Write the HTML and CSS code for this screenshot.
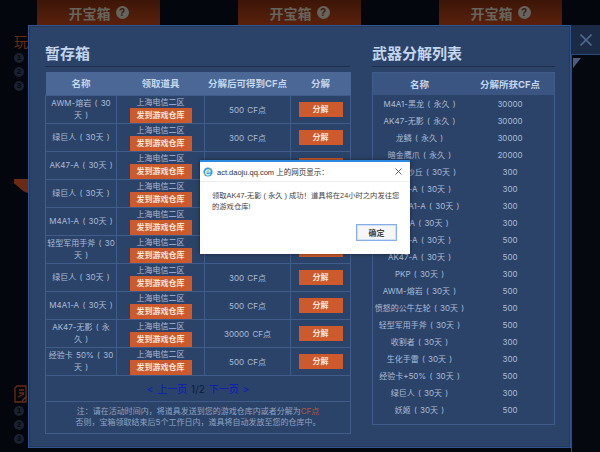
FILE: index.html
```html
<!DOCTYPE html>
<html lang="zh-CN">
<head>
<meta charset="utf-8">
<title>暂存箱</title>
<link rel="stylesheet" href="styles.css">
</head>
<body>
<div class="page">
  <div class="tiles">
    <div class="tile"><span>开宝箱</span><i class="help">?</i></div>
    <div class="tile"><span>开宝箱</span><i class="help">?</i></div>
    <div class="tile"><span>开宝箱</span><i class="help">?</i></div>
  </div>
  <div class="side">
    <div class="side-title">玩法</div>
    <div class="steps"><b>1</b><b>2</b><b>3</b></div>
    <div class="flag"></div>
    <svg class="side-icon" width="14" height="18" viewBox="0 0 14 18"><path d="M3 1h9v16H1V3zM5 5h5M5 8h5M4 12l6-3M8 16l5-5" fill="none" stroke="#6b2a14" stroke-width="1.3"/></svg>
    <div class="steps"><b>1</b><b>2</b><b>3</b></div>
  </div>
</div>

<div class="modal">
  <section class="col-left">
    <h2 class="title">暂存箱</h2>
    <table class="store">
      <colgroup><col class="c1"><col class="c2"><col class="c3"><col class="c4"></colgroup>
      <thead><tr><th>名称</th><th>领取道具</th><th>分解后可得到CF点</th><th>分解</th></tr></thead>
      <tbody>
        <tr><td class="name">AWM-熔岩 (&nbsp;30天&nbsp;)</td><td class="chan">上海电信二区<a class="btn wide">发到游戏仓库</a></td><td>500 CF点</td><td><a class="btn small">分解</a></td></tr>
        <tr><td class="name">绿巨人 (&nbsp;30天&nbsp;)</td><td class="chan">上海电信二区<a class="btn wide">发到游戏仓库</a></td><td>300 CF点</td><td><a class="btn small">分解</a></td></tr>
        <tr><td class="name">AK47-A (&nbsp;30天&nbsp;)</td><td class="chan">上海电信二区<a class="btn wide">发到游戏仓库</a></td><td>500 CF点</td><td><a class="btn small">分解</a></td></tr>
        <tr><td class="name">绿巨人 (&nbsp;30天&nbsp;)</td><td class="chan">上海电信二区<a class="btn wide">发到游戏仓库</a></td><td>300 CF点</td><td><a class="btn small">分解</a></td></tr>
        <tr><td class="name">M4A1-A (&nbsp;30天&nbsp;)</td><td class="chan">上海电信二区<a class="btn wide">发到游戏仓库</a></td><td>500 CF点</td><td><a class="btn small">分解</a></td></tr>
        <tr><td class="name">轻型军用手斧 (&nbsp;30天&nbsp;)</td><td class="chan">上海电信二区<a class="btn wide">发到游戏仓库</a></td><td>500 CF点</td><td><a class="btn small">分解</a></td></tr>
        <tr><td class="name">绿巨人 (&nbsp;30天&nbsp;)</td><td class="chan">上海电信二区<a class="btn wide">发到游戏仓库</a></td><td>300 CF点</td><td><a class="btn small">分解</a></td></tr>
        <tr><td class="name">M4A1-A (&nbsp;30天&nbsp;)</td><td class="chan">上海电信二区<a class="btn wide">发到游戏仓库</a></td><td>500 CF点</td><td><a class="btn small">分解</a></td></tr>
        <tr><td class="name">AK47-无影 (&nbsp;永久&nbsp;)</td><td class="chan">上海电信二区<a class="btn wide">发到游戏仓库</a></td><td>30000 CF点</td><td><a class="btn small">分解</a></td></tr>
        <tr><td class="name">经验卡 50% (&nbsp;30天&nbsp;)</td><td class="chan">上海电信二区<a class="btn wide">发到游戏仓库</a></td><td>500 CF点</td><td><a class="btn small">分解</a></td></tr>
        <tr class="pager-row"><td colspan="4"><a class="pg">&lt; 上一页</a> <span class="pg-num">1/2</span> <a class="pg">下一页 &gt;</a></td></tr>
        <tr class="note-row"><td colspan="4">注：请在活动时间内，将道具发送到您的游戏仓库内或者分解为<em>CF点</em><br>否则，宝箱领取结束后5个工作日内，道具将自动发放至您的仓库中。</td></tr>
      </tbody>
    </table>
  </section>
  <section class="col-right">
    <h2 class="title">武器分解列表</h2>
    <div class="list">
      <div class="list-head"><span>名称</span><span>分解所获CF点</span></div>
      <ul class="list-rows">
        <li><span>M4A1-黑龙 ( 永久 )</span><span>30000</span></li>
        <li><span>AK47-无影 ( 永久 )</span><span>30000</span></li>
        <li><span>龙鳞 ( 永久 )</span><span>30000</span></li>
        <li><span>暗金鹰爪 ( 永久 )</span><span>20000</span></li>
        <li><span>AWM-沙丘 ( 30天 )</span><span>300</span></li>
        <li><span>M4A1-A ( 30天 )</span><span>300</span></li>
        <li><span>Barrett A1-A ( 30天 )</span><span>300</span></li>
        <li><span>M14-A ( 30天 )</span><span>300</span></li>
        <li><span>M4A1-A ( 30天 )</span><span>500</span></li>
        <li><span>AK47-A ( 30天 )</span><span>500</span></li>
        <li><span>PKP ( 30天 )</span><span>300</span></li>
        <li><span>AWM-熔岩 ( 30天 )</span><span>500</span></li>
        <li><span>愤怒的公牛左轮 ( 30天 )</span><span>500</span></li>
        <li><span>轻型军用手斧 ( 30天 )</span><span>500</span></li>
        <li><span>收割者 ( 30天 )</span><span>300</span></li>
        <li><span>生化手雷 ( 30天 )</span><span>300</span></li>
        <li><span>经验卡+50% ( 30天 )</span><span>500</span></li>
        <li><span>绿巨人 ( 30天 )</span><span>300</span></li>
        <li><span>妖姬 ( 30天 )</span><span>500</span></li>
      </ul>
    </div>
  </section>
</div>

<div class="close-panel">
  <div class="close-btn"><svg width="12" height="12" viewBox="0 0 12 12"><path d="M.5.5l11 11M11.5.5l-11 11" stroke="#50668a" stroke-width="1.6" fill="none"/></svg></div>
  <div class="behind"><div class="corner"></div></div>
</div>

<div class="dialog" role="dialog">
  <div class="dlg-head">
    <svg class="ie" width="10" height="10" viewBox="0 0 10 10"><circle cx="5" cy="5" r="4.6" fill="#2f9de4"/><path d="M2.6 5h4.8M7.2 6.7A2.5 2.5 0 1 1 7.4 4.6" fill="none" stroke="#fff" stroke-width="1.1"/><path d="M1 8.6C2 6 5 2 9.2 1" fill="none" stroke="#f2c230" stroke-width=".7"/></svg>
    <span class="dlg-title">act.daoju.qq.com 上的网页显示：</span>
    <svg class="dlg-x" width="7" height="7" viewBox="0 0 7 7"><path d="M.5.5l6 6M6.5.5l-6 6" stroke="#555" stroke-width=".9" fill="none"/></svg>
  </div>
  <p class="dlg-msg">领取AK47-无影 ( 永久 ) 成功！道具将在24小时之内发往您的游戏仓库!</p>
  <div class="dlg-foot"><button class="dlg-ok">确定</button></div>
</div>
</body>
</html>
```
FILE: styles.css
```css
* { box-sizing: border-box; }
html, body { margin: 0; height: 100%; }
body {
  width: 600px;
  height: 452px;
  overflow: hidden;
  position: relative;
  background: #03060c;
  font-family: Inter, "Noto Sans CJK SC", sans-serif;
}

/* page behind the modal */
.tiles { display: flex; gap: 78px; padding-left: 37px; height: 25px; }
.tile {
  width: 123px;
  height: 25px;
  display: flex;
  align-items: center;
  justify-content: center;
  gap: 5px;
  background: linear-gradient(#3c1508, #5a210c);
  color: #66645c;
  font-size: 14px;
  font-weight: 700;
}
.help {
  width: 13px;
  height: 13px;
  border-radius: 50%;
  background: #66645c;
  color: #3a1608;
  font: 700 10px/13px "Liberation Sans", sans-serif;
  text-align: center;
}
.side { width: 28px; padding: 9px 0 0 14px; }
.side-title { color: #6b2a14; font-size: 14px; line-height: 16px; white-space: nowrap; }
.steps { display: flex; flex-direction: column; gap: 4px; margin: 3px 0 0 0; }
.steps b {
  width: 10px;
  height: 10px;
  border-radius: 50%;
  background: #1a2130;
  color: #05080e;
  font: 700 8px/10px "Liberation Sans", sans-serif;
  text-align: center;
}
.flag {
  width: 14px;
  height: 14px;
  margin-top: 88px;
  background: #6b2a14;
  clip-path: polygon(0 0, 100% 0, 100% 100%, 70% 90%, 0 30%);
}
.side-icon { display: block; margin-top: 192px; }

/* modal */
.modal {
  position: absolute;
  left: 28px;
  top: 25px;
  width: 543px;
  height: 423px;
  display: flex;
  gap: 22px;
  padding: 16px 0 0 16px;
  background: #2c4369;
  border: 1px solid #2f5590;
  box-shadow: inset 0 0 0 1px #25395c;
}
.col-left { width: 305px; }
.col-right { width: 183px; }
.title {
  margin: 0 0 5px;
  height: 25px;
  line-height: 24px;
  font-size: 15px;
  font-weight: 700;
  color: #c3d6ec;
  border-bottom: 1px solid #1f2f4d;
}

.store {
  width: 305px;
  table-layout: fixed;
  border-collapse: collapse;
  font-size: 8px;
  word-spacing: 1px;
  color: #a9bcd8;
  text-align: center;
}
.c1 { width: 71px; }
.c2 { width: 88px; }
.c3 { width: 86px; }
.c4 { width: 60px; }
.store th {
  height: 23px;
  padding: 0;
  background: #4a6795;
  color: #c3d6ec;
  font-size: 9.5px;
  font-weight: 700;
  border: 0;
}
.store td { height: 28px; padding: 0; border: 1px solid #3f5c8a; }
.store .name { padding: 0 1px; line-height: 12.5px; }
.store .chan { vertical-align: top; line-height: 12px; }
.btn {
  display: block;
  margin: 0 auto;
  height: 15px;
  line-height: 15px;
  background: #cc5a2c;
  color: #f6e6d8;
  font-weight: 700;
  font-size: 8px;
}
.wide { width: 62px; }
.small { width: 44px; }
.store .pager-row td { height: 26px; font-size: 10px; }
.pg { color: #0a16c4; }
.pg-num { color: #0e1a38; }
.store .note-row td { height: 32px; line-height: 11.5px; color: #8ea3c4; }
.note-row em { font-style: normal; color: #b8562f; }

.list { height: 353px; border: 1px solid #3f5c8a; font-size: 8px; word-spacing: 1px; color: #a9bcd8; }
.list-head {
  display: flex;
  height: 22px;
  align-items: center;
  background: #3b5582;
  color: #c3d6ec;
  font-size: 9.5px;
  font-weight: 700;
  text-align: center;
}
.list-head span:first-child, .list-rows span:first-child { width: 93px; white-space: nowrap; }
.list-head span:last-child, .list-rows span:last-child { width: 88px; }
.list-rows { list-style: none; margin: 0; padding: 0; }
.list-rows li { display: flex; height: 17px; align-items: center; text-align: center; }
.list-rows span:first-child { display: flex; justify-content: center; white-space: pre; }

/* close control beside the modal */
.close-panel { position: absolute; left: 571px; top: 25px; width: 29px; height: 427px; }
.close-btn {
  height: 29px;
  display: flex;
  align-items: center;
  justify-content: center;
  background: #1c2b45;
}
.behind { height: 398px; padding: 3px 0 0 1px; border: 1px solid #2c4a7f; border-right: 0; border-bottom: 0; background: #05080f; }
.corner { width: 8px; height: 10px; background: #4a5f7e; clip-path: polygon(0 0, 100% 0, 0 100%); }

/* browser alert */
.dialog {
  position: absolute;
  left: 200px;
  top: 160px;
  width: 210px;
  height: 94px;
  display: flex;
  flex-direction: column;
  background: #fff;
  border-top: 2px solid #2a8ae0;
  box-shadow: 0 0 4px rgba(0, 0, 0, .5);
  color: #444;
}
.dlg-head {
  height: 20px;
  display: flex;
  align-items: center;
  gap: 4px;
  padding: 0 8px 0 3px;
  border-bottom: 1px solid #eee;
}
.dlg-title { flex: 1; font-size: 7.5px; color: #333; white-space: nowrap; font-family: "Liberation Sans", "Noto Sans CJK SC", sans-serif; }
.dlg-msg { margin: 9px 8px 0 12px; font-size: 7.3px; line-height: 10.5px; font-family: "Liberation Sans", "Noto Sans CJK SC", sans-serif; }
.dlg-foot { margin-top: auto; padding: 0 13px 13px 0; display: flex; justify-content: flex-end; }
.dlg-ok {
  width: 41px;
  height: 17px;
  padding: 0;
  background: #f6f6f6;
  border: 1px solid #86aee8;
  box-shadow: inset 0 0 0 1px #cfe0f8;
  font: 700 8px "Noto Sans CJK SC", sans-serif;
  color: #444;
}
```
